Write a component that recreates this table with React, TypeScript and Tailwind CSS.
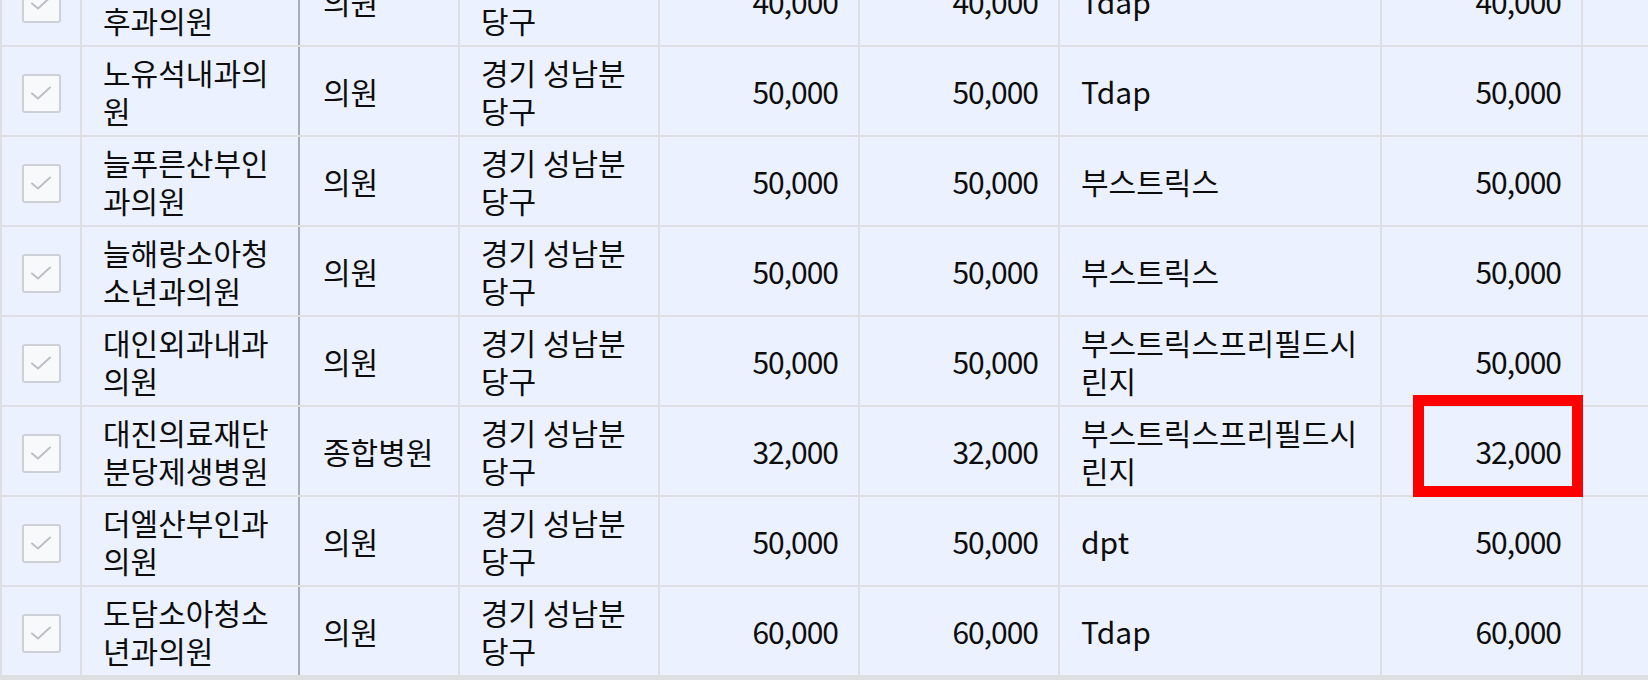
import React from "react";

type Row = {
  name: string;
  type: string;
  region: string;
  p1: string;
  p2: string;
  vaccine: string;
  p3: string;
};

const rows: Row[] = [
  { name: "노블레이비인후과의원", type: "의원", region: "경기 성남분당구", p1: "40,000", p2: "40,000", vaccine: "Tdap", p3: "40,000" },
  { name: "노유석내과의원", type: "의원", region: "경기 성남분당구", p1: "50,000", p2: "50,000", vaccine: "Tdap", p3: "50,000" },
  { name: "늘푸른산부인과의원", type: "의원", region: "경기 성남분당구", p1: "50,000", p2: "50,000", vaccine: "부스트릭스", p3: "50,000" },
  { name: "늘해랑소아청소년과의원", type: "의원", region: "경기 성남분당구", p1: "50,000", p2: "50,000", vaccine: "부스트릭스", p3: "50,000" },
  { name: "대인외과내과의원", type: "의원", region: "경기 성남분당구", p1: "50,000", p2: "50,000", vaccine: "부스트릭스프리필드시린지", p3: "50,000" },
  { name: "대진의료재단분당제생병원", type: "종합병원", region: "경기 성남분당구", p1: "32,000", p2: "32,000", vaccine: "부스트릭스프리필드시린지", p3: "32,000" },
  { name: "더엘산부인과의원", type: "의원", region: "경기 성남분당구", p1: "50,000", p2: "50,000", vaccine: "dpt", p3: "50,000" },
  { name: "도담소아청소년과의원", type: "의원", region: "경기 성남분당구", p1: "60,000", p2: "60,000", vaccine: "Tdap", p3: "60,000" },
];

function Check() {
  return (
    <div className="w-[39px] h-[39px] rounded-[3px] border-2 border-[#cdd0d6] bg-[#f8f9fb] flex items-center justify-center">
      <svg width="22" height="16" viewBox="0 0 22 16" fill="none">
        <path d="M2 8.5 L8 13.5 L20 2.5" stroke="#bcbfc6" strokeWidth="2" strokeLinecap="round" strokeLinejoin="round" />
      </svg>
    </div>
  );
}

const cell = "h-full flex items-center border-r-2 border-[#dedfe2] shrink-0";

export default function App() {
  return (
    <div
      className="relative w-[1648px] h-[690px] overflow-hidden bg-white text-[#0d0d0d]"
      style={{ fontFamily: '"Noto Sans CJK KR", "Noto Sans", sans-serif' }}
    >
      <div className="-mt-[43px] border-l-2 border-[#dedfe2] border-b-[3px] border-b-[#dedfe2] bg-[#ebf1fe]">
        {rows.map((r, i) => (
          <div key={i} className="flex h-[90px] border-b-2 border-[#dedfe2] text-[30px] leading-[38px] font-normal">
            <div className={`${cell} w-[80px] justify-center pt-[4px]`}>
              <Check />
            </div>
            <div className={`${cell} w-[218px] pl-[21px] pr-[18px] border-r-[#a9abb5]`}>
              <span>{r.name}</span>
            </div>
            <div className={`${cell} w-[160px] pl-[23px] pr-[14px]`}>
              <span>{r.type}</span>
            </div>
            <div className={`${cell} w-[200px] pl-[21px] pr-[20px]`}>
              <span>{r.region}</span>
            </div>
            <div className={`${cell} w-[200px] justify-end pr-[20px]`}>
              <span className="tracking-[-1px]">{r.p1}</span>
            </div>
            <div className={`${cell} w-[200px] justify-end pr-[20px]`}>
              <span className="tracking-[-1px]">{r.p2}</span>
            </div>
            <div className={`${cell} w-[322px] pl-[21px] pr-[10px]`}>
              <span>{r.vaccine}</span>
            </div>
            <div className={`${cell} w-[201px] justify-end pr-[20px]`}>
              <span className="tracking-[-1px]">{r.p3}</span>
            </div>
            <div className="h-full flex-1" />
          </div>
        ))}
      </div>
      <div className="absolute left-[1413px] top-[395px] w-[170px] h-[102px] border-[11px] border-[#ff0000]" />
    </div>
  );
}
